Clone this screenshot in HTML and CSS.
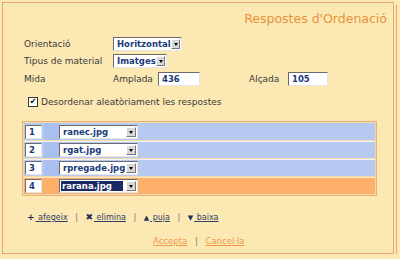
FILE: index.html
```html
<!DOCTYPE html>
<html lang="ca">
<head>
  <meta charset="UTF-8" />
  <title>Respostes d'Ordenació</title>
  <link rel="stylesheet" href="styles.css">
</head>
<body>
  <div class="panel">
    <h1>Respostes d'Ordenació</h1>
    <div class="form">
      <div class="row">
        <span class="label">Orientació</span>
        <span class="select w-orient"><span class="val">Horitzontal</span><span class="arrow"></span></span>
      </div>
      <div class="row">
        <span class="label">Tipus de material</span>
        <span class="select w-tipus"><span class="val">Imatges</span><span class="arrow"></span></span>
      </div>
      <div class="row">
        <span class="label">Mida</span>
        <span class="sub">Amplada</span>
        <span class="input w-amp">436</span>
        <span class="sub sub-alt">Alçada</span>
        <span class="input w-alt">105</span>
      </div>
      <div class="row check-row">
        <span class="check">&#10004;</span>
        <span>Desordenar aleatòriament les respostes</span>
      </div>
    </div>

    <div class="list">
      <div class="item">
        <span class="cell-num"><span class="input num">1</span></span>
        <span class="gap"></span>
        <span class="select w-file"><span class="val">ranec.jpg</span><span class="arrow"></span></span>
      </div>
      <div class="item">
        <span class="cell-num"><span class="input num">2</span></span>
        <span class="gap"></span>
        <span class="select w-file"><span class="val">rgat.jpg</span><span class="arrow"></span></span>
      </div>
      <div class="item">
        <span class="cell-num"><span class="input num">3</span></span>
        <span class="gap"></span>
        <span class="select w-file"><span class="val">rpregade.jpg</span><span class="arrow"></span></span>
      </div>
      <div class="item active">
        <span class="cell-num"><span class="input num">4</span></span>
        <span class="gap"></span>
        <span class="select w-file"><span class="val sel">rarana.jpg</span><span class="arrow"></span></span>
      </div>
    </div>

    <div class="actions">
      <a href="#"><b class="ico">+</b> afegeix</a>
      <span class="sep">|</span>
      <a href="#"><b class="ico">&#10006;</b> elimina</a>
      <span class="sep">|</span>
      <a href="#"><b class="ico tri">&#9650;</b> puja</a>
      <span class="sep">|</span>
      <a href="#"><b class="ico tri">&#9660;</b> baixa</a>
    </div>

    <div class="footer">
      <a href="#">Accepta</a>
      <span class="sep">|</span>
      <a href="#">Cancel·la</a>
    </div>
  </div>
</body>
</html>
```

FILE: styles.css
```css
* { margin: 0; padding: 0; box-sizing: border-box; }
body {
  background: #fce8b2;
  font-family: "DejaVu Sans", Verdana, sans-serif;
  font-size: 9px;
  color: #3a3a3a;
}
.panel {
  margin: 2px 0 0 2px;
  width: 392px;
  height: 252px;
  border: 1px solid #eaa96a;
  background: #fce8b2;
  box-shadow: 2px 2px 0 #fce8b2, 3px 3px 0 #eaa96a;
}
h1 {
  font-size: 12.5px;
  font-weight: normal;
  color: #e8913c;
  text-align: right;
  padding: 8px 6px 0 0;
  height: 32px;
}
.form { padding-left: 21px; }
.row {
  display: flex;
  align-items: center;
  height: 17.5px;
}
.label { width: 89px; }
.sub { width: 45px; }
.sub-alt { width: 39px; margin-left: 49px; }
.select {
  display: flex;
  align-items: center;
  height: 14px;
  background: #fff;
  border: 1px solid;
  border-color: #6b6b6b #e6e6e6 #e6e6e6 #6b6b6b;
  padding: 1px;
}
.select .val {
  flex: 1;
  font-weight: bold;
  color: #203a78;
  padding-left: 2px;
  line-height: 10px;
  font-size: 8.5px;
}
.arrow {
  width: 10px;
  height: 10px;
  background: #d8d8d8;
  border: 1px solid;
  border-color: #fff #777 #777 #fff;
  position: relative;
}
.arrow::after {
  content: "";
  position: absolute;
  left: 2px;
  top: 3px;
  border-left: 2.5px solid transparent;
  border-right: 2.5px solid transparent;
  border-top: 3px solid #000;
}
.w-orient { width: 69px; }
.w-tipus { width: 54px; }
.input {
  display: block;
  height: 14px;
  background: #fff;
  border: 1px solid;
  border-color: #6b6b6b #e6e6e6 #e6e6e6 #6b6b6b;
  font-weight: bold;
  color: #203a78;
  font-size: 8.5px;
  line-height: 12px;
  padding-left: 3px;
}
.w-amp { width: 42px; }
.w-alt { width: 40px; }
.check-row { margin-top: 6px; padding-left: 4px; gap: 3px; }
.check {
  width: 10px;
  height: 10px;
  background: #fff;
  border: 1px solid #333;
  font-size: 8px;
  line-height: 8px;
  text-align: center;
  color: #000;
}
.list {
  margin: 10px 0 0 19px;
  width: 355px;
  border: 1px solid #eab27a;
  background: #f6d9a6;
  padding: 1px;
}
.item {
  display: flex;
  align-items: center;
  height: 17px;
  background: #b6c9f1;
  margin-top: 1px;
  padding: 0 1px;
  border-top: 1px solid #eef2fb;
}
.item:first-child { margin-top: 0; border-top: 0; }
.item.active { background: #fcb06a; border-top-color: #fde6cc; }
.cell-num { width: 19px; }
.num { width: 17px; height: 14px; }
.gap { width: 15px; height: 100%; background: #a9bfee; }
.active .gap { background: #fcb06a; }
.w-file { width: 79px; }
.val.sel {
  background: #1b2a63;
  color: #fff;
  margin-right: 3px;
  padding-left: 1px;
}
.actions {
  margin: 16px 0 0 24px;
  color: #555;
  font-size: 8px;
}
.actions a {
  color: #2f3f6a;
  text-decoration: underline;
}
.actions .ico {
  display: inline-block;
  text-decoration: none;
  color: #1f2f5a;
  font-size: 9px;
  margin-right: 1px;
}
.actions .ico.tri { font-size: 7px; }
.actions .sep { margin: 0 5px; }
.sep { color: #777; margin: 0 5px; }
.footer {
  margin: 14px 0 0 150px;
  font-size: 8.5px;
}
.footer a { color: #ec9a4a; text-decoration: underline; }
```
